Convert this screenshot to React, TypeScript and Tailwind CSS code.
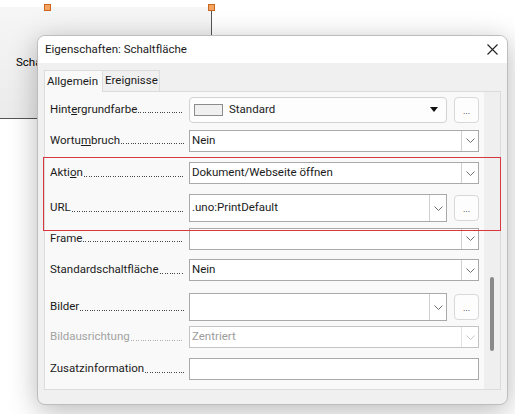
import { ReactNode } from "react";

const font = { fontFamily: 'Roboto, "Noto Sans", sans-serif' };

const Chevron = ({ disabled }: { disabled?: boolean }) => (
  <svg width="9" height="5" viewBox="0 0 9 5" fill="none">
    <path d="M0.5 0.5 L4.5 4.5 L8.5 0.5" stroke={disabled ? "#c8c8c8" : "#6e6e6e"} strokeWidth="1" />
  </svg>
);

// leader dots drawn as a pattern, the label column ends at the same x for every row
const Dots = ({ disabled }: { disabled?: boolean }) => (
  <span
    className={`mb-[5px] ml-[1px] h-[1px] min-w-0 flex-1 ${
      disabled
        ? "bg-[repeating-linear-gradient(to_right,#b0b0b0_0_1px,transparent_1px_2.4px)]"
        : "bg-[repeating-linear-gradient(to_right,#444_0_1px,transparent_1px_2.4px)]"
    }`}
  />
);

const Label = ({ children, disabled }: { children: ReactNode; disabled?: boolean }) => (
  <div className={`flex w-[134px] items-end text-[11.5px] ${disabled ? "text-[#a3a3a3]" : "text-[#1b1b1b]"}`}>
    <span className="whitespace-nowrap">{children}</span>
    <Dots disabled={disabled} />
  </div>
);

const ListBox = ({ value, width = "w-[290px]", h = "h-[22px]", disabled }: { value?: string; width?: string; h?: string; disabled?: boolean }) => (
  <div className={`flex ${width} ${h} items-stretch border ${disabled ? "border-[#c4c4c4]" : "border-[#a9a9a9]"} bg-white`}>
    <div className={`flex flex-1 items-center pl-[2px] text-[11.5px] ${disabled ? "text-[#9c9c9c]" : "text-[#1b1b1b]"}`}>{value}</div>
    <div className={`flex w-[17px] items-center justify-center border-l ${disabled ? "border-[#e2e2e2]" : "border-[#cfcfcf]"}`}>
      <Chevron disabled={disabled} />
    </div>
  </div>
);

const DotsButton = ({ h = "h-[26px]" }: { h?: string }) => (
  <div className={`flex w-[25px] ${h} items-end justify-center rounded-[4px] border border-[#d8d8d8] bg-[#fdfdfd] pb-[6px] text-[9px] leading-none text-[#222]`}>
    ...
  </div>
);

const Row = ({ h, children }: { h: string; children: ReactNode }) => (
  <div className={`flex ${h} items-center`}>{children}</div>
);

export default function App() {
  return (
    <div className="relative h-[414px] w-[515px] overflow-hidden bg-white" style={font}>
      {/* document: selected button */}
      <div className="h-[7px]" />
      <div className="flex h-[112px] w-[212px] items-center border-r border-b border-[#555] bg-gradient-to-b from-[#f6f6f6] to-[#ebebeb] pl-[16px] text-[11.5px] text-black">
        Schaltfläche
      </div>
      <div className="absolute left-[44px] top-[4px] h-[7px] w-[7px] border border-[#c8661f] bg-[#f6a462]" />
      <div className="absolute left-[208px] top-[4px] h-[7px] w-[7px] border border-[#c8661f] bg-[#f6a462]" />

      {/* dialog */}
      <div className="absolute left-[37px] top-[35px] flex h-[370px] w-[471px] flex-col overflow-hidden rounded-[8px] border border-[#bdbdbd] bg-[#f0f0f0] shadow-[0_6px_28px_rgba(0,0,0,0.28)]">
        <div className="flex h-[30px] items-center justify-between bg-white pl-[7px] pr-[9px] text-[11.5px] text-[#1b1b1b]">
          <span>Eigenschaften: Schaltfläche</span>
          <svg width="11" height="11" viewBox="0 0 11 11">
            <path d="M0.5 0.5 L10.5 10.5 M10.5 0.5 L0.5 10.5" stroke="#222" strokeWidth="1.1" />
          </svg>
        </div>

        <div className="flex flex-1 flex-col px-[6px] pt-[7px] pb-[14px]">
          {/* tabs */}
          <div className="flex h-[21px] items-end">
            <div className="relative z-10 -mb-px flex h-[22px] w-[59px] items-center border border-b-0 border-[#dcdcdc] bg-[#f9f9f9] px-[2px] text-[11.5px] text-[#1b1b1b]">
              Allgemein
            </div>
            <div className="flex h-[21px] w-[57px] items-center border border-l-0 border-b-0 border-[#dcdcdc] bg-[#f0f0f0] px-[2px] text-[11.5px] text-[#1b1b1b]">
              Ereignisse
            </div>
          </div>

          {/* panel */}
          <div className="flex flex-1 border border-[#dcdcdc] bg-[#f9f9f9]">
            <div className="flex flex-1 flex-col pl-[5px] pt-[2px]">
              <Row h="h-[31px]">
                <Label>
                  Hint<span className="underline">e</span>rgrundfarbe
                </Label>
                <div className="ml-[5px] flex items-center gap-[7px]">
                  <div className="flex h-[26px] w-[258px] items-center rounded-[4px] border border-[#d2d2d2] bg-[#fdfdfd] pl-[4px] pr-[8px] text-[11.5px] text-[#1b1b1b]">
                    <div className="h-[12px] w-[29px] border border-[#8c8c8c] bg-[#f0f0f0]" />
                    <span className="ml-[6px] flex-1">Standard</span>
                    <svg width="8" height="5" viewBox="0 0 8 5">
                      <path d="M0 0 L8 0 L4 5 Z" fill="#111" />
                    </svg>
                  </div>
                  <DotsButton />
                </div>
              </Row>
              <Row h="h-[31px]">
                <Label>
                  Wortu<span className="underline">m</span>bruch
                </Label>
                <div className="ml-[5px]">
                  <ListBox value="Nein" />
                </div>
              </Row>
              <Row h="h-[34px]">
                <Label>
                  Akti<span className="underline">o</span>n
                </Label>
                <div className="ml-[5px]">
                  <ListBox value="Dokument/Webseite öffnen" />
                </div>
              </Row>
              <Row h="h-[36px]">
                <Label>URL</Label>
                <div className="ml-[5px] flex items-center gap-[7px]">
                  <ListBox value=".uno:PrintDefault" width="w-[258px]" h="h-[28px]" />
                  <DotsButton />
                </div>
              </Row>
              <Row h="h-[25px]">
                <Label>Frame</Label>
                <div className="ml-[5px]">
                  <ListBox />
                </div>
              </Row>
              <Row h="h-[38px]">
                <Label>Standardschaltfläche</Label>
                <div className="ml-[5px]">
                  <ListBox value="Nein" />
                </div>
              </Row>
              <Row h="h-[36px]">
                <Label>Bilder</Label>
                <div className="ml-[5px] flex items-center gap-[7px]">
                  <ListBox width="w-[258px]" h="h-[28px]" />
                  <DotsButton />
                </div>
              </Row>
              <Row h="h-[24px]">
                <Label disabled>Bildausrichtung</Label>
                <div className="ml-[5px]">
                  <ListBox value="Zentriert" disabled />
                </div>
              </Row>
              <Row h="h-[40px]">
                <Label>Zusatzinformation</Label>
                <div className="ml-[5px] h-[22px] w-[290px] border border-[#a9a9a9] bg-white" />
              </Row>
            </div>
            {/* scrollbar */}
            <div className="flex w-[16px] flex-col bg-[#efefef] pt-[185px]">
              <div className="mx-auto h-[74px] w-[4px] rounded-full bg-[#8a8a8a]" />
            </div>
          </div>
        </div>
      </div>

      {/* annotation */}
      <div className="absolute left-[43px] top-[157px] h-[74px] w-[458px] border-[1.5px] border-[#d8373f]" />
    </div>
  );
}
